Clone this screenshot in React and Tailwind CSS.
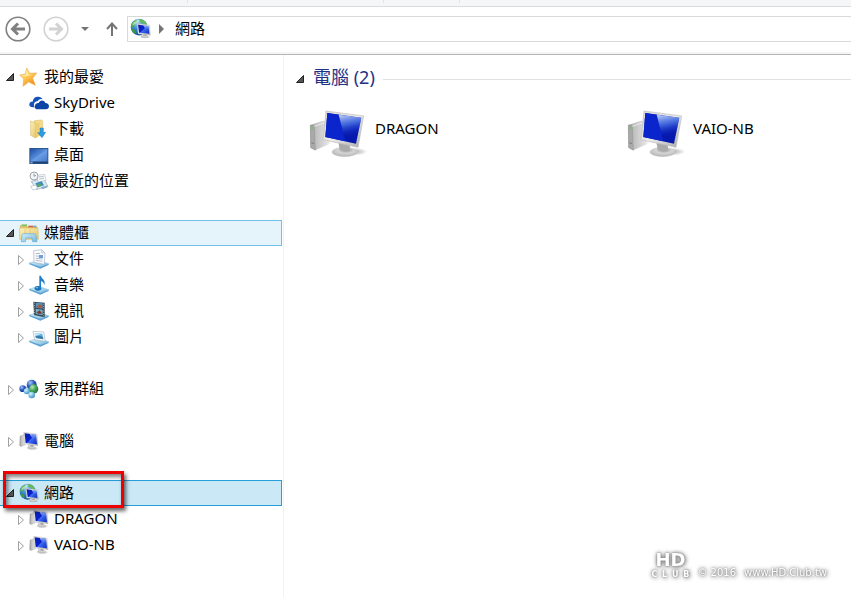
import React from "react";

function Gradients() {
  return (
    <svg width="0" height="0" className="absolute" aria-hidden="true">
      <defs>
        <linearGradient id="screen" x1="0" y1="0" x2="1" y2="0.9">
          <stop offset="0" stopColor="#0a22a8" />
          <stop offset="0.5" stopColor="#0820d0" />
          <stop offset="0.56" stopColor="#3f6cf0" />
          <stop offset="1" stopColor="#1030c8" />
        </linearGradient>
        <linearGradient id="glare" x1="0" y1="0" x2="0.2" y2="1">
          <stop offset="0" stopColor="#d4e6ff" stopOpacity="0.95" />
          <stop offset="0.5" stopColor="#5b8cf5" stopOpacity="0.6" />
          <stop offset="1" stopColor="#0820d0" stopOpacity="0" />
        </linearGradient>
        <linearGradient id="tower" x1="0" y1="0" x2="1" y2="0">
          <stop offset="0" stopColor="#8b8b8b" />
          <stop offset="0.25" stopColor="#bdbdbd" />
          <stop offset="1" stopColor="#e9e9e9" />
        </linearGradient>
        <linearGradient id="bezel" x1="0" y1="0" x2="1" y2="1">
          <stop offset="0" stopColor="#d6d6d6" />
          <stop offset="0.5" stopColor="#ececec" />
          <stop offset="1" stopColor="#a8a8a8" />
        </linearGradient>
        <radialGradient id="stand" cx="0.55" cy="0.3" r="0.7">
          <stop offset="0" stopColor="#8e8e8e" />
          <stop offset="0.45" stopColor="#d5d5d5" />
          <stop offset="1" stopColor="#b5b5b5" />
        </radialGradient>
        <radialGradient id="shade">
          <stop offset="0" stopColor="#555" stopOpacity="0.55" />
          <stop offset="1" stopColor="#555" stopOpacity="0" />
        </radialGradient>
        <radialGradient id="globe" cx="0.4" cy="0.2" r="0.85">
          <stop offset="0" stopColor="#b5dcf8" />
          <stop offset="0.45" stopColor="#3d8fd0" />
          <stop offset="1" stopColor="#0d4a8c" />
        </radialGradient>
        <radialGradient id="ballGreen" cx="0.35" cy="0.3" r="0.8">
          <stop offset="0" stopColor="#b9ecb4" />
          <stop offset="0.5" stopColor="#3fa055" />
          <stop offset="1" stopColor="#176b35" />
        </radialGradient>
        <radialGradient id="ballBlue" cx="0.35" cy="0.3" r="0.8">
          <stop offset="0" stopColor="#a8c8f8" />
          <stop offset="0.5" stopColor="#2858c0" />
          <stop offset="1" stopColor="#0d2c80" />
        </radialGradient>
        <radialGradient id="ballCyan" cx="0.35" cy="0.3" r="0.8">
          <stop offset="0" stopColor="#d8f4fc" />
          <stop offset="0.6" stopColor="#6ab4dc" />
          <stop offset="1" stopColor="#3580b8" />
        </radialGradient>
        <linearGradient id="star" x1="0" y1="0" x2="0.6" y2="1">
          <stop offset="0" stopColor="#fff3a8" />
          <stop offset="0.5" stopColor="#ffcf58" />
          <stop offset="1" stopColor="#f58a1c" />
        </linearGradient>
        <linearGradient id="folder" x1="0" y1="0" x2="1" y2="1">
          <stop offset="0" stopColor="#fdf3bf" />
          <stop offset="1" stopColor="#e6c265" />
        </linearGradient>
        <linearGradient id="tray" x1="0" y1="0" x2="1" y2="1">
          <stop offset="0" stopColor="#d4f1fb" />
          <stop offset="1" stopColor="#72b4dc" />
        </linearGradient>
        <linearGradient id="desk" x1="0" y1="0" x2="1" y2="1">
          <stop offset="0" stopColor="#1f4fa8" />
          <stop offset="0.55" stopColor="#5c94e0" />
          <stop offset="1" stopColor="#2c62bc" />
        </linearGradient>
      </defs>
    </svg>
  );
}

function Icon({ children, className = "h-5 w-5" }) {
  return (
    <svg viewBox="0 0 60 60" className={className + " shrink-0"} aria-hidden="true">
      {children}
    </svg>
  );
}

const StarIcon = () => (
  <Icon>
    <path
      d="M23 3 L32 19 L53 18 L41 34 L49 55 L29 45 L12 58 L14 36 L2 24 L19 21 Z"
      fill="url(#star)"
      stroke="#eeb04e"
      strokeWidth="2"
      strokeLinejoin="round"
    />
    <path d="M23 9 L29 23 L42 23 L20 28 L9 26 L20 23 Z" fill="#fffbd6" opacity="0.6" />
  </Icon>
);

const SkyDriveIcon = () => (
  <Icon>
    <path
      d="M12 43 C3 43 0 38 1 33 C2 28 7 25 11 26 C12 16 19 10 28 11 C34 11 38 14 41 19 C35 17 29 19 26 25 C18 25 14 31 15 37 C15 40 16 42 18 43 Z"
      fill="#1553b8"
    />
    <path
      d="M26 49 C19 49 16 44 18 38 C19 32 24 29 29 30 C32 22 44 19 49 30 C56 30 60 34 60 40 C60 46 56 49 51 49 Z"
      fill="#0c45a6"
    />
  </Icon>
);

const DownloadsIcon = () => (
  <Icon>
    <path d="M16 5 L36 3 Q41 3 41 8 L41 48 L16 50 Z" fill="#f5dc8c" stroke="#d6b45a" strokeWidth="1.5" />
    <path d="M5 6 L21 12 L21 57 L5 49 Z" fill="url(#folder)" stroke="#cfac52" strokeWidth="1.5" />
    <path d="M21 12 L32 12 L32 50 L21 57 Z" fill="#efcf75" />
    <path
      d="M33 27 L43 27 L43 40 L50 40 L39 56 L26 41 L33 41 Z"
      fill="#319be0"
      stroke="#1b78bd"
      strokeWidth="1.5"
    />
  </Icon>
);

const DesktopIcon = () => (
  <Icon>
    <rect x="1" y="9" width="57" height="48" fill="#2d568f" />
    <rect x="4" y="12" width="51" height="37" fill="url(#desk)" />
    <path d="M4 49 L55 12 L55 49 Z" fill="#83b1f0" opacity="0.3" />
    <rect x="4" y="51" width="51" height="4" fill="#20426f" />
    <rect x="4" y="51" width="7" height="4" fill="#6fb1e8" />
  </Icon>
);

const RecentIcon = () => (
  <Icon>
    <path d="M7 31 L44 23 L56 45 L22 56 Z" fill="#dceaf2" stroke="#8ba5b7" strokeWidth="2" />
    <path d="M23 13 L47 10 L51 28 L27 33 Z" fill="#f7f9fb" stroke="#a5b1ba" strokeWidth="1.5" />
    <path d="M29 18 L44 16 M31 24 L45 22" stroke="#93a7b8" strokeWidth="2" />
    <circle cx="15" cy="15" r="12" fill="#f3f6f8" stroke="#9ba5ad" strokeWidth="3" />
    <path d="M15 8 V16 L21 13" stroke="#64747f" strokeWidth="2" fill="none" />
    <path d="M19 37 L38 31 L45 43 L26 49 Z" fill="#3c88c0" />
    <path d="M21 42 L33 36 L40 43 L26 48 Z" fill="#5da46b" />
    <path d="M5 46 L21 42 L25 53 L11 57 Z" fill="#fff" stroke="#98abb8" strokeWidth="1.5" />
    <path d="M36 49 L55 44 L56 49 L40 55 Z" fill="#85aac2" />
  </Icon>
);

const LibraryIcon = () => (
  <Icon>
    <path d="M4 8 L20 8 L24 12 L54 12 L54 46 L4 46 Z" fill="#e8c765" stroke="#c89f3e" strokeWidth="1.5" />
    <rect x="8" y="4" width="16" height="6" fill="#86c46a" />
    <rect x="28" y="8" width="14" height="5" fill="#d8654b" />
    <rect x="43" y="8" width="9" height="5" fill="#62a4d8" />
    <path d="M2 15 L57 15 L58 49 L2 49 Z" fill="url(#folder)" stroke="#d4b254" strokeWidth="1.5" />
    <path d="M18 18 V47 M33 18 V35" stroke="#e2c56d" strokeWidth="2" />
    <path
      d="M9 37 Q9 32 14 32 L45 32 Q51 32 51 38 L54 56 L41 56 L39 45 L21 45 L19 56 L7 56 Z"
      fill="url(#tray)"
      stroke="#63add8"
      strokeWidth="2"
    />
  </Icon>
);

const Tray = () => (
  <>
    <path d="M1 42 L28 34 L59 44 L34 57 Z" fill="url(#tray)" stroke="#84bddd" strokeWidth="1.5" />
    <path d="M1 42 L34 53 L59 44 L59 48 L34 59 L1 46 Z" fill="#61a4d2" />
  </>
);

const DocumentsIcon = () => (
  <Icon>
    <Tray />
    <path d="M14 5 L38 2 L48 12 L46 46 L15 40 Z" fill="#fbfcfe" stroke="#a6b2c4" strokeWidth="2" />
    <path d="M38 2 L37 12 L48 12 Z" fill="#dce4ee" stroke="#a6b2c4" />
    <path d="M20 14 L33 13 M20 21 L41 22 M20 28 L41 30 M20 34 L40 37" stroke="#9cafc7" strokeWidth="2.5" />
    <rect x="30" y="18" width="12" height="9" fill="#6b9edb" />
  </Icon>
);

const MusicIcon = () => (
  <Icon>
    <Tray />
    <ellipse cx="27" cy="40" rx="10" ry="7" fill="#1671bd" />
    <path d="M31 41 L31 2 L36 2 C37 12 51 13 46 31 C45 22 40 19 36 18 L36 41 Z" fill="#237fc9" />
    <ellipse cx="24" cy="38" rx="4" ry="2" fill="#7dc4f0" />
  </Icon>
);

const VideosIcon = () => (
  <Icon>
    <Tray />
    <path d="M13 2 L47 5 L47 49 L15 42 Z" fill="#34414e" />
    <path d="M20 5 L41 7 L41 23 L20 20 Z" fill="#5194c4" />
    <path d="M20 23 L41 26 L41 43 L20 39 Z" fill="#7cacc5" />
    <path d="M22 17 L31 10 L40 13 L40 20 L27 20 Z" fill="#a95a40" />
    <path d="M22 35 L32 28 L40 38 L29 38 Z" fill="#703d33" />
    <path d="M16 5 V41 M44 8 V47" stroke="#dfe9ef" strokeWidth="2" strokeDasharray="3 4" />
  </Icon>
);

const PicturesIcon = () => (
  <Icon>
    <Tray />
    <path d="M12 13 L44 15 L49 43 L17 38 Z" fill="#fff" stroke="#a3b0bd" strokeWidth="2" />
    <path d="M17 18 L40 20 L43 37 L21 33 Z" fill="#62b0e3" />
    <path d="M19 28 Q29 23 42 30 L43 37 L21 33 Z" fill="#397eab" />
    <path d="M17 19 L38 20 L19 27 Z" fill="#cceafb" />
  </Icon>
);

const HomegroupIcon = () => (
  <Icon>
    <path d="M12 30 L38 17 L41 44 Z" fill="none" stroke="#8bbad8" strokeWidth="4" />
    <circle cx="38" cy="17" r="15" fill="url(#ballBlue)" />
    <circle cx="11" cy="29" r="10" fill="url(#ballBlue)" />
    <circle cx="44" cy="30" r="14" fill="url(#ballGreen)" />
    <circle cx="23" cy="37" r="9" fill="url(#ballCyan)" />
    <circle cx="38" cy="48" r="10" fill="url(#ballCyan)" />
  </Icon>
);

const ComputerIcon = () => (
  <Icon>
    <ellipse cx="40" cy="52" rx="19" ry="6" fill="url(#shade)" />
    <path d="M3 15 L17 10 L19 41 L6 47 L2 43 Z" fill="url(#tower)" stroke="#a5a5a5" />
    <path d="M29 40 L42 42 L51 51 Q39 58 25 51 Z" fill="url(#stand)" />
    <path d="M14 4 L54 9 L57 44 L17 39 Z" fill="url(#bezel)" stroke="#b1b1b1" />
    <path d="M17 7 L51 11 L54 40 L20 36 Z" fill="url(#screen)" />
    <path d="M32 9 L51 11 L53 33 L42 26 Z" fill="url(#glare)" />
  </Icon>
);

const NetworkIcon = ({ className }) => (
  <Icon className={className}>
    <circle cx="26" cy="26" r="24" fill="url(#globe)" />
    <path d="M5 15 Q10 7 18 5 L20 12 L14 16 L13 23 L6 27 L3 22 Z" fill="#4aa84c" />
    <path d="M6 31 L13 34 L17 43 L13 45 Q6 40 4 33 Z" fill="#3f9a48" />
    <path d="M27 3 Q44 5 49 20 L39 19 L34 13 L28 12 Z" fill="#65bb54" />
    <path d="M8 14 Q17 4 28 6 Q20 15 7 23 Z" fill="#e0f6de" opacity="0.6" />
    <ellipse cx="44" cy="54" rx="15" ry="5" fill="url(#shade)" />
    <path d="M35 45 L47 47 L54 54 Q43 60 30 54 Z" fill="url(#stand)" />
    <path d="M20 16 L56 20 L58 49 L23 45 Z" fill="url(#bezel)" stroke="#aaa" />
    <path d="M23 19 L53 23 L55 45 L26 42 Z" fill="url(#screen)" />
    <path d="M38 21 L53 23 L54 40 L45 34 Z" fill="url(#glare)" />
  </Icon>
);

function LargeComputerIcon() {
  return (
    <svg viewBox="27 30 174 144" className="h-12 w-[58px] shrink-0" aria-hidden="true">
      <ellipse cx="160" cy="155" rx="42" ry="12" fill="url(#shade)" />
      <path d="M31 75 L69 62 L88 66 L88 132 L46 151 L32 143 Z" fill="url(#tower)" />
      <path d="M31 75 L43 79 L46 151 L32 143 Z" fill="#a9a9a9" stroke="#858585" />
      <path d="M43 79 L80 66" stroke="#fafafa" strokeWidth="2" />
      <circle cx="37" cy="84" r="2.5" fill="#49d13d" />
      <path d="M34 128 L42 131" stroke="#666" strokeWidth="2" />
      <ellipse cx="134" cy="156" rx="38" ry="14" fill="url(#stand)" stroke="#bdbdbd" />
      <path d="M115 126 L150 134 L149 150 Q134 157 119 149 Z" fill="#aaa" />
      <path d="M78 33 L191 48 L174 142 L69 119 Z" fill="url(#bezel)" stroke="#bcbcbc" strokeWidth="2" />
      <path d="M82 39 L184 53 L168 131 L76 111 Z" fill="#0719ad" />
      <path d="M82 39 L116 44 L136 124 L76 111 Z" fill="#0a25cc" />
      <path d="M116 44 L184 53 L172 113 L131 104 Z" fill="url(#glare)" />
    </svg>
  );
}

function Chevron({ state }) {
  if (state === "open")
    return (
      <svg viewBox="0 0 14 14" className="h-3.5 w-3.5 shrink-0" aria-hidden="true">
        <path d="M8.5 3.5 V10.5 H1.5 Z" fill="#555" stroke="#222" />
      </svg>
    );
  if (state === "closed")
    return (
      <svg viewBox="0 0 14 14" className="h-3.5 w-3.5 shrink-0" aria-hidden="true">
        <path d="M3.5 3.5 L8.5 8 L3.5 12.5 Z" fill="#fff" stroke="#a0a0a0" />
      </svg>
    );
  return <span className="w-3.5 shrink-0" />;
}

const groups = [
  {
    label: "我的最愛",
    icon: StarIcon,
    state: "open",
    items: [
      { label: "SkyDrive", icon: SkyDriveIcon },
      { label: "下載", icon: DownloadsIcon },
      { label: "桌面", icon: DesktopIcon },
      { label: "最近的位置", icon: RecentIcon },
    ],
  },
  {
    label: "媒體櫃",
    icon: LibraryIcon,
    state: "open",
    tone: "border-[#70c0e7] bg-[#e5f3fb]",
    items: [
      { label: "文件", icon: DocumentsIcon, state: "closed" },
      { label: "音樂", icon: MusicIcon, state: "closed" },
      { label: "視訊", icon: VideosIcon, state: "closed" },
      { label: "圖片", icon: PicturesIcon, state: "closed" },
    ],
  },
  { label: "家用群組", icon: HomegroupIcon, state: "closed", items: [] },
  { label: "電腦", icon: ComputerIcon, state: "closed", items: [] },
  {
    label: "網路",
    icon: NetworkIcon,
    state: "open",
    tone: "border-[#26a0da] bg-[#cbe8f6]",
    marked: true,
    items: [
      { label: "DRAGON", icon: ComputerIcon, state: "closed" },
      { label: "VAIO-NB", icon: ComputerIcon, state: "closed" },
    ],
  },
];

function Row({ item, nested }) {
  const Glyph = item.icon;
  return (
    <button
      type="button"
      className={
        "relative flex h-[26px] w-full items-center border border-l-0 text-left " +
        (nested ? "pl-[15px] " : "pl-[5px] ") +
        (item.tone || "border-transparent")
      }
    >
      <Chevron state={item.state} />
      <Glyph />
      <span className="ml-[5px] pb-0.5 whitespace-nowrap">{item.label}</span>
      {item.marked && (
        <span className="absolute -top-2.5 left-[3px] z-10 h-[37px] w-[121px] border-[3px] border-[#ee0000] shadow-[2px_3px_4px_rgba(0,0,0,0.6),inset_2px_3px_4px_rgba(0,0,0,0.5)]" />
      )}
    </button>
  );
}

function Toolbar() {
  return (
    <div className="flex h-12 items-center border-b border-[#b4b4b4] pb-1 pl-[5px] shadow-[inset_0_-2px_0_#f5f5f5]">
      <button type="button" aria-label="Back" className="h-[26px] w-[26px]">
        <svg viewBox="0 0 26 26" className="h-[26px] w-[26px]" fill="none" stroke="#808080">
          <circle cx="13" cy="13" r="11.8" strokeWidth="1.6" />
          <path d="M20 13 H8 M13 7.5 L7.5 13 L13 18.5" strokeWidth="3" />
        </svg>
      </button>
      <button type="button" aria-label="Forward" className="ml-3 h-[26px] w-[26px]">
        <svg viewBox="0 0 26 26" className="h-[26px] w-[26px]" fill="none" stroke="#d2d2d2">
          <circle cx="13" cy="13" r="11.8" strokeWidth="1.6" />
          <path d="M6 13 H18 M13 7.5 L18.5 13 L13 18.5" strokeWidth="3" />
        </svg>
      </button>
      <button type="button" aria-label="Recent locations" className="ml-3 flex h-5 w-2 items-center">
        <svg viewBox="0 0 8 4" className="h-1 w-2">
          <path d="M0 0 H8 L4 4 Z" fill="#747474" />
        </svg>
      </button>
      <button type="button" aria-label="Up" className="ml-4 h-4 w-3.5">
        <svg viewBox="0 0 14 16" className="h-4 w-3.5" fill="none" stroke="#747474" strokeWidth="2">
          <path d="M7 15 V2.5 M2 8 L7 2.5 L12 8" />
        </svg>
      </button>
      <nav
        aria-label="Address"
        className="ml-2 flex h-[26px] min-w-0 flex-1 items-center border border-r-0 border-[#d9d9d9] pl-0.5"
      >
        <NetworkIcon className="h-[21px] w-[21px]" />
        <svg viewBox="0 0 5 10" className="ml-2 h-2.5 w-[5px]" aria-hidden="true">
          <path d="M0 0 L5 5 L0 10 Z" fill="#747474" />
        </svg>
        <button type="button" className="ml-[11px] pb-0.5">
          網路
        </button>
      </nav>
    </div>
  );
}

function Watermark() {
  return (
    <footer className="fixed right-6 bottom-[18px] flex items-end gap-2 font-['DejaVu_Sans',sans-serif] text-[10px] leading-3 text-white [text-shadow:0_0_2px_#777,0_0_4px_#888,1px_1px_5px_#888]">
      <div className="flex w-[38px] flex-col font-bold">
        <div className="text-center text-[18px] leading-[21px]">HD</div>
        <div className="flex justify-between text-[8px] leading-[9px]">
          <span>C</span>
          <span>L</span>
          <span>U</span>
          <span>B</span>
        </div>
      </div>
      <p className="flex gap-2">
        <span>© 2016</span>
        <span>www.HD.Club.tw</span>
      </p>
    </footer>
  );
}

export default function App() {
  return (
    <div className="flex min-h-screen flex-col bg-white font-['Noto_Sans','Noto_Sans_CJK_TC',sans-serif] text-[15px] leading-5 text-black">
      <Gradients />
      <div className="flex h-[7px] border-b border-[#dadbdc] bg-[#f5f6f7]">
        <div className="h-[3px] w-[188px] border-r border-[#e2e3e4]" />
        <div className="h-[3px] w-[196px] border-r border-[#e2e3e4]" />
        <div className="h-[3px] w-[76px] border-r border-[#e2e3e4]" />
      </div>
      <Toolbar />
      <div className="flex flex-1">
        <nav aria-label="Folders" className="w-[284px] shrink-0 border-r border-[#f2f2f2] pt-[9px] pr-px">
          <ul className="flex flex-col gap-[26px]">
            {groups.map((group) => (
              <li key={group.label}>
                <Row item={group} />
                {group.items.length > 0 && (
                  <ul>
                    {group.items.map((item) => (
                      <li key={item.label}>
                        <Row item={item} nested />
                      </li>
                    ))}
                  </ul>
                )}
              </li>
            ))}
          </ul>
        </nav>
        <main className="min-w-0 flex-1 pt-2.5 pl-[11px]">
          <div className="flex items-center">
            <Chevron state="open" />
            <h1 className="ml-1 pb-1 text-[18px] leading-6 whitespace-nowrap text-[#1e3287]">電腦 (2)</h1>
            <div className="ml-2 h-px flex-1 bg-[#e2e2e2]" />
          </div>
          <ul className="mt-[17px] grid grid-cols-[318px_minmax(0,1fr)] pl-3.5">
            {["DRAGON", "VAIO-NB"].map((name) => (
              <li key={name}>
                <button type="button" className="flex items-start gap-2 text-left">
                  <LargeComputerIcon />
                  <span className="pt-2 whitespace-nowrap">{name}</span>
                </button>
              </li>
            ))}
          </ul>
        </main>
      </div>
      <Watermark />
    </div>
  );
}
